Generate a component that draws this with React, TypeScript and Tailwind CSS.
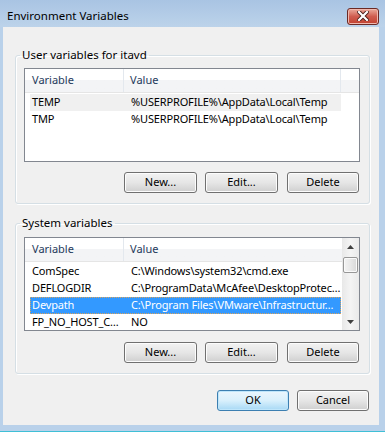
import React from 'react'

const font = { fontFamily: '"Noto Sans", "Open Sans", sans-serif' }

type Row = { name: string; value: string; selected?: 'grey' | 'blue' }

const userRows: Row[] = [
  { name: 'TEMP', value: '%USERPROFILE%\\AppData\\Local\\Temp', selected: 'grey' },
  { name: 'TMP', value: '%USERPROFILE%\\AppData\\Local\\Temp' },
]

const systemRows: Row[] = [
  { name: 'ComSpec', value: 'C:\\Windows\\system32\\cmd.exe' },
  { name: 'DEFLOGDIR', value: 'C:\\ProgramData\\McAfee\\DesktopProtec…' },
  { name: 'Devpath', value: 'C:\\Program Files\\VMware\\Infrastructur…', selected: 'blue' },
  { name: 'FP_NO_HOST_C…', value: 'NO' },
]

const WinButton = ({ label, primary, className = '' }: { label: string; primary?: boolean; className?: string }) => (
  <button
    className={
      primary
        ? `h-[21px] rounded-[3px] border border-[#3c7fb1] bg-gradient-to-b from-[#eaf6fd] via-[#d9f0fc] to-[#a7d9f5] text-[11px] text-black shadow-[inset_0_0_0_1px_#bfe6fb] ${className}`
        : `h-[21px] rounded-[3px] border border-[#707070] bg-gradient-to-b from-[#f2f2f2] via-[#e6e6e6] to-[#cfcfcf] text-[11px] text-black shadow-[inset_0_0_0_1px_#fcfcfc] ${className}`
    }
  >
    {label}
  </button>
)

const ListHeader = ({ filler }: { filler: boolean }) => (
  <div className="flex h-[24px] border-b border-[#e5e5e5] bg-gradient-to-b from-white from-50% to-[#f3f4f6] to-50% text-[11px] text-[#1e395b]">
    <div className="flex w-[99px] items-center border-r border-[#e3e8ee] pl-[7px]">Variable</div>
    <div className={filler ? 'flex w-[217px] items-center border-r border-[#e3e8ee] pl-[6px]' : 'flex flex-1 items-center pl-[6px]'}>Value</div>
    {filler && <div className="flex-1" />}
  </div>
)

const ListRows = ({ rows, width }: { rows: Row[]; width: string }) => (
  <div className="mt-[1px] pl-[5px]">
    {rows.map((r) => (
      <div
        key={r.name}
        className={`flex h-[17px] items-center whitespace-nowrap text-[11px] tracking-[-0.15px] ${width} ${
          r.selected === 'blue'
            ? 'bg-[#3399ff] text-white outline-1 outline-dotted outline-[#d9a35c] -outline-offset-1'
            : r.selected === 'grey'
              ? 'bg-[#f0f0f0] text-black'
              : 'text-black'
        }`}
      >
        <div className="w-[94px] overflow-hidden text-ellipsis pl-[2px]">{r.name}</div>
        <div className="flex-1 overflow-hidden text-ellipsis pl-[7px]">{r.value}</div>
      </div>
    ))}
  </div>
)

const ScrollBar = () => (
  <div className="flex h-full w-[17px] flex-col bg-gradient-to-r from-[#e8e8e8] via-[#f4f4f4] to-[#eaeaea]">
    <div className="flex h-[17px] items-center justify-center">
      <svg width="7" height="4" viewBox="0 0 7 4"><path d="M0 4 L3.5 0 L7 4 Z" fill="#404040" /></svg>
    </div>
    <div className="mx-[1px] mt-[2px] h-[16px] rounded-[2px] border border-[#979797] bg-gradient-to-r from-[#f3f3f3] via-[#e8e8e8] to-[#d8d8d8] shadow-[inset_0_0_0_1px_#fafafa]" />
    <div className="flex-1" />
    <div className="flex h-[17px] items-center justify-center">
      <svg width="7" height="4" viewBox="0 0 7 4"><path d="M0 0 L3.5 4 L7 0 Z" fill="#404040" /></svg>
    </div>
  </div>
)

const Group = ({ title, children, className = '' }: { title: string; children: React.ReactNode; className?: string }) => (
  <fieldset className={`w-[355px] rounded-[3px] border border-[#d5dfe5] px-[4px] pb-[10px] shadow-[1px_1px_0_#ffffff,inset_1px_1px_0_#ffffff] ${className}`}>
    <legend className="px-[2px] text-[11.5px] leading-[16px] text-black">{title}</legend>
    {children}
  </fieldset>
)

const ButtonRow = () => (
  <div className="flex pl-[100px]">
    <WinButton label="New..." className="w-[73px]" />
    <WinButton label="Edit..." className="ml-[8px] w-[73px]" />
    <WinButton label="Delete" className="ml-[9px] w-[72px]" />
  </div>
)

export default function App() {
  return (
    <div className="flex h-[432px] w-[385px] flex-col bg-[#b9d1ea]" style={font}>
      {/* title bar */}
      <div className="flex h-[27px] items-center justify-between bg-gradient-to-b from-[#a9c4e3] to-[#bcd3ea] pl-[7px] pr-[6px] pt-[5px]">
        <span className="text-[11.5px] text-black">Environment Variables</span>
        <div className="flex h-[17px] w-[32px] items-center justify-center rounded-[3px] border border-[#6b2a25] bg-gradient-to-b from-[#e9a99b] via-[#cf5c4f] to-[#c2412f] shadow-[inset_0_0_0_1px_#f0b8ae]">
          <svg width="12" height="10" viewBox="0 0 12 10">
            <path d="M2 1 L10 9 M10 1 L2 9" stroke="#4a1e1a" strokeWidth="4" strokeLinecap="square" />
            <path d="M2 1 L10 9 M10 1 L2 9" stroke="#ffffff" strokeWidth="2.2" strokeLinecap="square" />
          </svg>
        </div>
      </div>

      {/* client */}
      <div className="ml-[3px] mr-[6px] flex h-[398px] flex-col bg-[#f0f0f0] pl-[12px]">
        <Group title="User variables for itavd" className="mt-[20px]">
          <div className="mt-[5px] pl-[4px]">
            <div className="h-[94px] w-[336px] border border-[#828790] bg-white">
              <ListHeader filler />
              <ListRows rows={userRows} width="w-[311px]" />
            </div>
            <div className="mt-[10px]">
              <ButtonRow />
            </div>
          </div>
        </Group>

        <Group title="System variables" className="mt-[11px]">
          <div className="mt-[6px] pl-[4px]">
            <div className="flex h-[94px] w-[336px] border border-[#828790] bg-white">
              <div className="flex-1 overflow-hidden">
                <ListHeader filler={false} />
                <ListRows rows={systemRows} width="w-[311px]" />
              </div>
              <ScrollBar />
            </div>
            <div className="mt-[11px]">
              <ButtonRow />
            </div>
          </div>
        </Group>

        <div className="mt-[16px] flex pl-[202px]">
          <WinButton label="OK" primary className="w-[72px]" />
          <WinButton label="Cancel" className="ml-[8px] w-[72px]" />
        </div>
      </div>
      <div className="flex-1" />
      <div className="h-[1px] bg-[#3fbfd6]" />
    </div>
  )
}
